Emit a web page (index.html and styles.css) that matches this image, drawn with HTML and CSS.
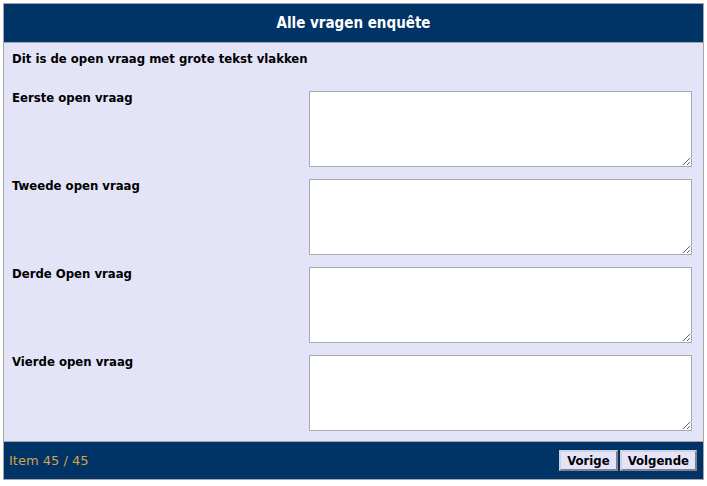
FILE: index.html
```html
<!DOCTYPE html>
<html>
<head>
<meta charset="utf-8">
<link rel="stylesheet" href="styles.css">
</head>
<body>
<div class="panel">
  <div class="panel-head">Alle vragen enquête</div>
  <div class="panel-body">
    <div class="intro">Dit is de open vraag met grote tekst vlakken</div>
    <div class="questions">
      <label class="q-label">Eerste open vraag</label>
      <textarea class="q-input"></textarea>
      <label class="q-label">Tweede open vraag</label>
      <textarea class="q-input"></textarea>
      <label class="q-label">Derde Open vraag</label>
      <textarea class="q-input"></textarea>
      <label class="q-label">Vierde open vraag</label>
      <textarea class="q-input"></textarea>
    </div>
  </div>
  <div class="panel-foot">
    <span class="counter">Item 45 / 45</span>
    <div class="nav">
      <button class="btn">Vorige</button>
      <button class="btn">Volgende</button>
    </div>
  </div>
</div>
</body>
</html>
```
FILE: styles.css
```css
html, body {
  margin: 0;
  padding: 0;
  background: #ffffff;
}
body {
  font-family: "DejaVu Sans Condensed", "DejaVu Sans", Verdana, sans-serif;
  font-size: 13px;
}
.panel {
  margin: 3px 3px 0 3px;
  width: 699px;
  border: 1px solid #a6a6a6;
}
.panel-head {
  height: 38px;
  background: #003366;
  color: #ffffff;
  font-weight: bold;
  font-size: 15px;
  display: flex;
  align-items: center;
  justify-content: center;
  border-bottom: 1px solid #a6a6a6;
}
.panel-body {
  background: #e4e4f8;
  padding: 8px 11px 10px 8px;
}
.intro {
  font-weight: bold;
  color: #000000;
  line-height: 16px;
  margin-bottom: 24px;
}
.questions {
  display: grid;
  grid-template-columns: 1fr 383px;
  row-gap: 12px;
}
.q-label {
  font-weight: bold;
  color: #000000;
  line-height: 14px;
}
.q-input {
  box-sizing: border-box;
  width: 383px;
  height: 76px;
  margin: 0;
  border: 1px solid #a9a9b4;
  background: #ffffff;
  padding: 2px;
}
.panel-foot {
  height: 37px;
  background: #003366;
  border-top: 1px solid #a6a6a6;
  display: flex;
  align-items: center;
  justify-content: space-between;
  padding: 0 6px 0 5px;
}
.counter {
  font-family: "DejaVu Sans", Verdana, sans-serif;
  color: #d4a24c;
  font-size: 13px;
}
.nav {
  display: flex;
  gap: 2px;
}
.btn {
  font-family: "DejaVu Sans Condensed", "DejaVu Sans", Verdana, sans-serif;
  font-weight: bold;
  font-size: 13px;
  color: #000000;
  background: #e4e4f8;
  border: 2px outset #d0d0e0;
  padding: 1px 6px;
  height: 21px;
  line-height: 15px;
}
```
